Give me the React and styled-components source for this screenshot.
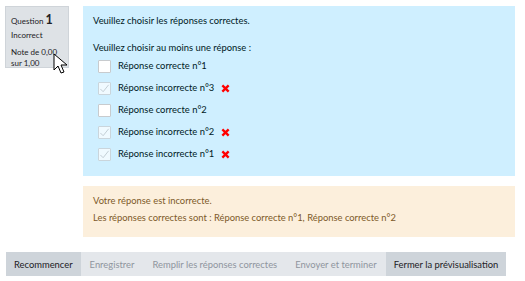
import styled, { createGlobalStyle } from 'styled-components'

const Global = createGlobalStyle`
  body {
    margin: 0;
    background: #fff;
    font-family: Lato, "Open Sans", sans-serif;
    color: #1d2125;
  }
`

const Page = styled.div`
  padding: 6px 10px 0 5px;
  width: 525px;
  box-sizing: border-box;
`

const Question = styled.div`
  display: flex;
  gap: 14px;
  align-items: flex-start;
`

const Info = styled.div`
  width: 64px;
  height: 62px;
  box-sizing: border-box;
  background: #dee2e6;
  border: 1px solid #cfd4d9;
  padding: 5px 5px 0;
  font-size: 8px;
  line-height: 11px;
  color: #1d2125;
  position: relative;
`

const QNo = styled.div`
  height: 15px;
  line-height: 15px;
  margin-bottom: 3px;
  span {
    font-size: 12.5px;
    font-weight: 700;
  }
`

const State = styled.div`
  margin-bottom: 6px;
`

const Content = styled.div`
  flex: 1;
  display: flex;
  flex-direction: column;
  gap: 10px;
`

const Formulation = styled.div`
  background: #cfefff;
  padding: 8px 10px 11px;
  font-size: 9.4px;
  line-height: 14px;
  color: #001a1e;
`

const Prompt = styled.div`
  margin-bottom: 13px;
`

const Answers = styled.div`
  display: flex;
  flex-direction: column;
`

const Row = styled.label`
  display: flex;
  align-items: center;
  height: 22px;
  gap: 7px;
  padding-left: 5px;
`

const Box = styled.span`
  width: 13px;
  height: 13px;
  box-sizing: border-box;
  background: #fff;
  border: 1px solid #c8cbce;
  border-radius: 1px;
  display: flex;
  align-items: center;
  justify-content: center;
  opacity: ${(p) => (p.$checked ? 0.7 : 1)};
`

const Feedback = styled.div`
  background: #fcefdc;
  color: #7d5a29;
  padding: 7px 10px 10px;
  font-size: 9.4px;
  line-height: 15px;
  p {
    margin: 0 0 2px;
  }
`

const Bar = styled.div`
  display: flex;
  margin-top: 15px;
  margin-left: 1px;
`

const Btn = styled.button`
  border: 0;
  height: 24px;
  padding: 0 ${(p) => (p.$active ? 8 : 9)}px;
  white-space: nowrap;
  font-family: inherit;
  font-size: 9.4px;
  background: ${(p) => (p.$active ? '#ced4da' : '#e4e7eb')};
  color: ${(p) => (p.$active ? '#1d2125' : '#8f959e')};
`

const Cursor = styled.svg`
  position: absolute;
  left: 47px;
  top: 46px;
`

const Cross = () => (
  <svg width="9" height="9" viewBox="0 0 10 10">
    <path d="M1.5 1.5 L8.5 8.5 M8.5 1.5 L1.5 8.5" stroke="#f00" strokeWidth="2.6" />
  </svg>
)

const Check = () => (
  <svg width="11" height="11" viewBox="0 0 12 12">
    <path d="M1.5 6.5 L4.5 9.5 L10.5 2" fill="none" stroke="#b8bcc0" strokeWidth="1" />
  </svg>
)

const answers = [
  { label: 'Réponse correcte n°1', checked: false },
  { label: 'Réponse incorrecte n°3', checked: true },
  { label: 'Réponse correcte n°2', checked: false },
  { label: 'Réponse incorrecte n°2', checked: true },
  { label: 'Réponse incorrecte n°1', checked: true },
]

export default function App() {
  return (
    <Page>
      <Global />
      <Question>
        <Info>
          <QNo>
            Question <span>1</span>
          </QNo>
          <State>Incorrect</State>
          <div>Note de 0,00 sur 1,00</div>
          <Cursor width="16" height="22" viewBox="0 0 16 22">
            <path d="M1 1 L1 17 L5 13 L8 20 L11 19 L8 12 L14 12 Z" fill="#fff" stroke="#000" strokeWidth="1" />
          </Cursor>
        </Info>
        <Content>
          <Formulation>
            <Prompt>Veuillez choisir les réponses correctes.</Prompt>
            <div>Veuillez choisir au moins une réponse :</div>
            <Answers>
              {answers.map((a) => (
                <Row key={a.label}>
                  <Box $checked={a.checked}>{a.checked && <Check />}</Box>
                  <span>{a.label}</span>
                  {a.checked && <Cross />}
                </Row>
              ))}
            </Answers>
          </Formulation>
          <Feedback>
            <p>Votre réponse est incorrecte.</p>
            <p>Les réponses correctes sont : Réponse correcte n°1, Réponse correcte n°2</p>
          </Feedback>
        </Content>
      </Question>
      <Bar>
        <Btn $active>Recommencer</Btn>
        <Btn>Enregistrer</Btn>
        <Btn>Remplir les réponses correctes</Btn>
        <Btn>Envoyer et terminer</Btn>
        <Btn $active>Fermer la prévisualisation</Btn>
      </Bar>
    </Page>
  )
}
